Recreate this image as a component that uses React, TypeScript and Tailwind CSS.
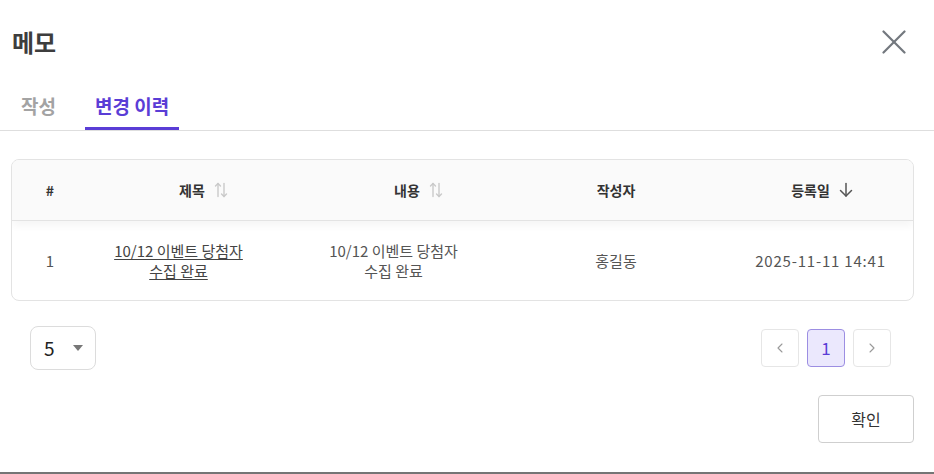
import { ChevronLeft, ChevronRight } from "lucide-react";

const FONT = "font-['Noto_Sans_CJK_KR','Noto_Sans',sans-serif]";

function SortIcon() {
  return (
    <svg width="14" height="16" viewBox="0 0 14 16" fill="none" stroke="#c9c9c9" strokeWidth="1.4" strokeLinecap="round" strokeLinejoin="round">
      <path d="M4 1.5v13" />
      <path d="M1.5 4 4 1.5 6.5 4" />
      <path d="M10 1.5v13" />
      <path d="M7.5 12 10 14.5 12.5 12" />
    </svg>
  );
}

function DownArrow() {
  return (
    <svg width="16" height="16" viewBox="0 0 16 16" fill="none" stroke="#555" strokeWidth="1.5" strokeLinecap="round" strokeLinejoin="round">
      <path d="M8 1.5v12.5" />
      <path d="M2.5 8.5 8 14l5.5-5.5" />
    </svg>
  );
}

function CloseIcon() {
  return (
    <svg width="24" height="24" viewBox="0 0 24 24" fill="none" stroke="#73787e" strokeWidth="2.2" strokeLinecap="round">
      <path d="M1.5 1.5l21 21" />
      <path d="M22.5 1.5l-21 21" />
    </svg>
  );
}

export default function App() {
  return (
    <div className={`w-[934px] h-[474px] bg-white flex flex-col ${FONT}`}>
      {/* Title */}
      <div className="h-[84px] flex items-center justify-between pl-3 pr-[28px] shrink-0">
        <h1 className="text-[24px] font-bold text-[#3d3d3d] leading-none">메모</h1>
        <button type="button" className="w-6 h-6 flex items-center justify-center">
          <CloseIcon />
        </button>
      </div>

      {/* Tabs */}
      <div className="h-[47px] flex items-stretch gap-[19px] pl-[11px] border-b border-[#dedede] shrink-0">
        <button type="button" className="px-[10px] text-[19px] font-bold text-[#a3a3a3] border-b-[3px] border-transparent pt-[1px]">
          작성
        </button>
        <button type="button" className="px-[10px] text-[19px] font-bold text-[#5a3dd6] border-b-[3px] border-[#5a3dd6] pt-[1px]">
          변경 이력
        </button>
      </div>

      {/* Table */}
      <div className="mt-[28px] ml-[11px] mr-[20px] border border-[#e3e3e3] rounded-lg overflow-hidden">
        <div className="relative z-10 h-[61px] grid grid-cols-[76px_181px_249px_196px_1fr] items-center bg-[#fafafa] border-b border-[#e3e3e3] shadow-[0_5px_8px_rgba(0,0,0,0.04)] text-[14px] font-bold text-[#333]">
          <div className="text-center">#</div>
          <div className="flex items-center justify-center gap-[9px] pl-[50px]">
            <span>제목</span>
            <SortIcon />
          </div>
          <div className="flex items-center justify-center gap-[9px] pl-[50px]">
            <span>내용</span>
            <SortIcon />
          </div>
          <div className="text-center">작성자</div>
          <div className="flex items-center justify-center gap-2 pl-[18px]">
            <span>등록일</span>
            <DownArrow />
          </div>
        </div>
        <div className="h-[79px] grid grid-cols-[76px_181px_249px_196px_1fr] items-center text-[15px] text-[#555] leading-5">
          <div className="text-center">1</div>
          <div className="text-center underline underline-offset-2 text-[#444]">
            10/12 이벤트 당첨자
            <br />
            수집 완료
          </div>
          <div className="text-center">
            10/12 이벤트 당첨자
            <br />
            수집 완료
          </div>
          <div className="text-center">홍길동</div>
          <div className="text-center pl-[14px] tracking-[0.8px]">2025-11-11 14:41</div>
        </div>
      </div>

      {/* Pagination */}
      <div className="mt-[25px] ml-[30px] mr-[43px] flex items-center justify-between">
        <button type="button" className="w-[66px] h-[44px] border border-[#dcdcdc] rounded-lg flex items-center pl-[13px] gap-[18px]">
          <span className="text-[19px] text-[#222]">5</span>
          <span className="w-0 h-0 border-l-[5.5px] border-r-[5.5px] border-t-[6px] border-l-transparent border-r-transparent border-t-[#777]" />
        </button>
        <div className="flex items-center gap-2">
          <button type="button" className="w-[38px] h-[38px] border border-[#e6e6e6] rounded-[4px] flex items-center justify-center text-[#999]">
            <ChevronLeft size={16} strokeWidth={1.6} />
          </button>
          <button type="button" className="w-[38px] h-[38px] border border-[#9c8ee2] bg-[#ebe8fd] rounded-[4px] flex items-center justify-center text-[17px] text-[#5a3dd6]">
            1
          </button>
          <button type="button" className="w-[38px] h-[38px] border border-[#e6e6e6] rounded-[4px] flex items-center justify-center text-[#999]">
            <ChevronRight size={16} strokeWidth={1.6} />
          </button>
        </div>
      </div>

      {/* Footer */}
      <div className="flex justify-end mr-[20px] mt-[25px]">
        <button type="button" className="w-[96px] h-[48px] border border-[#cfcfcf] rounded-[4px] text-[16px] text-[#333]">
          확인
        </button>
      </div>

      <div className="mt-auto h-[2px] bg-[#757575]" />
    </div>
  );
}
